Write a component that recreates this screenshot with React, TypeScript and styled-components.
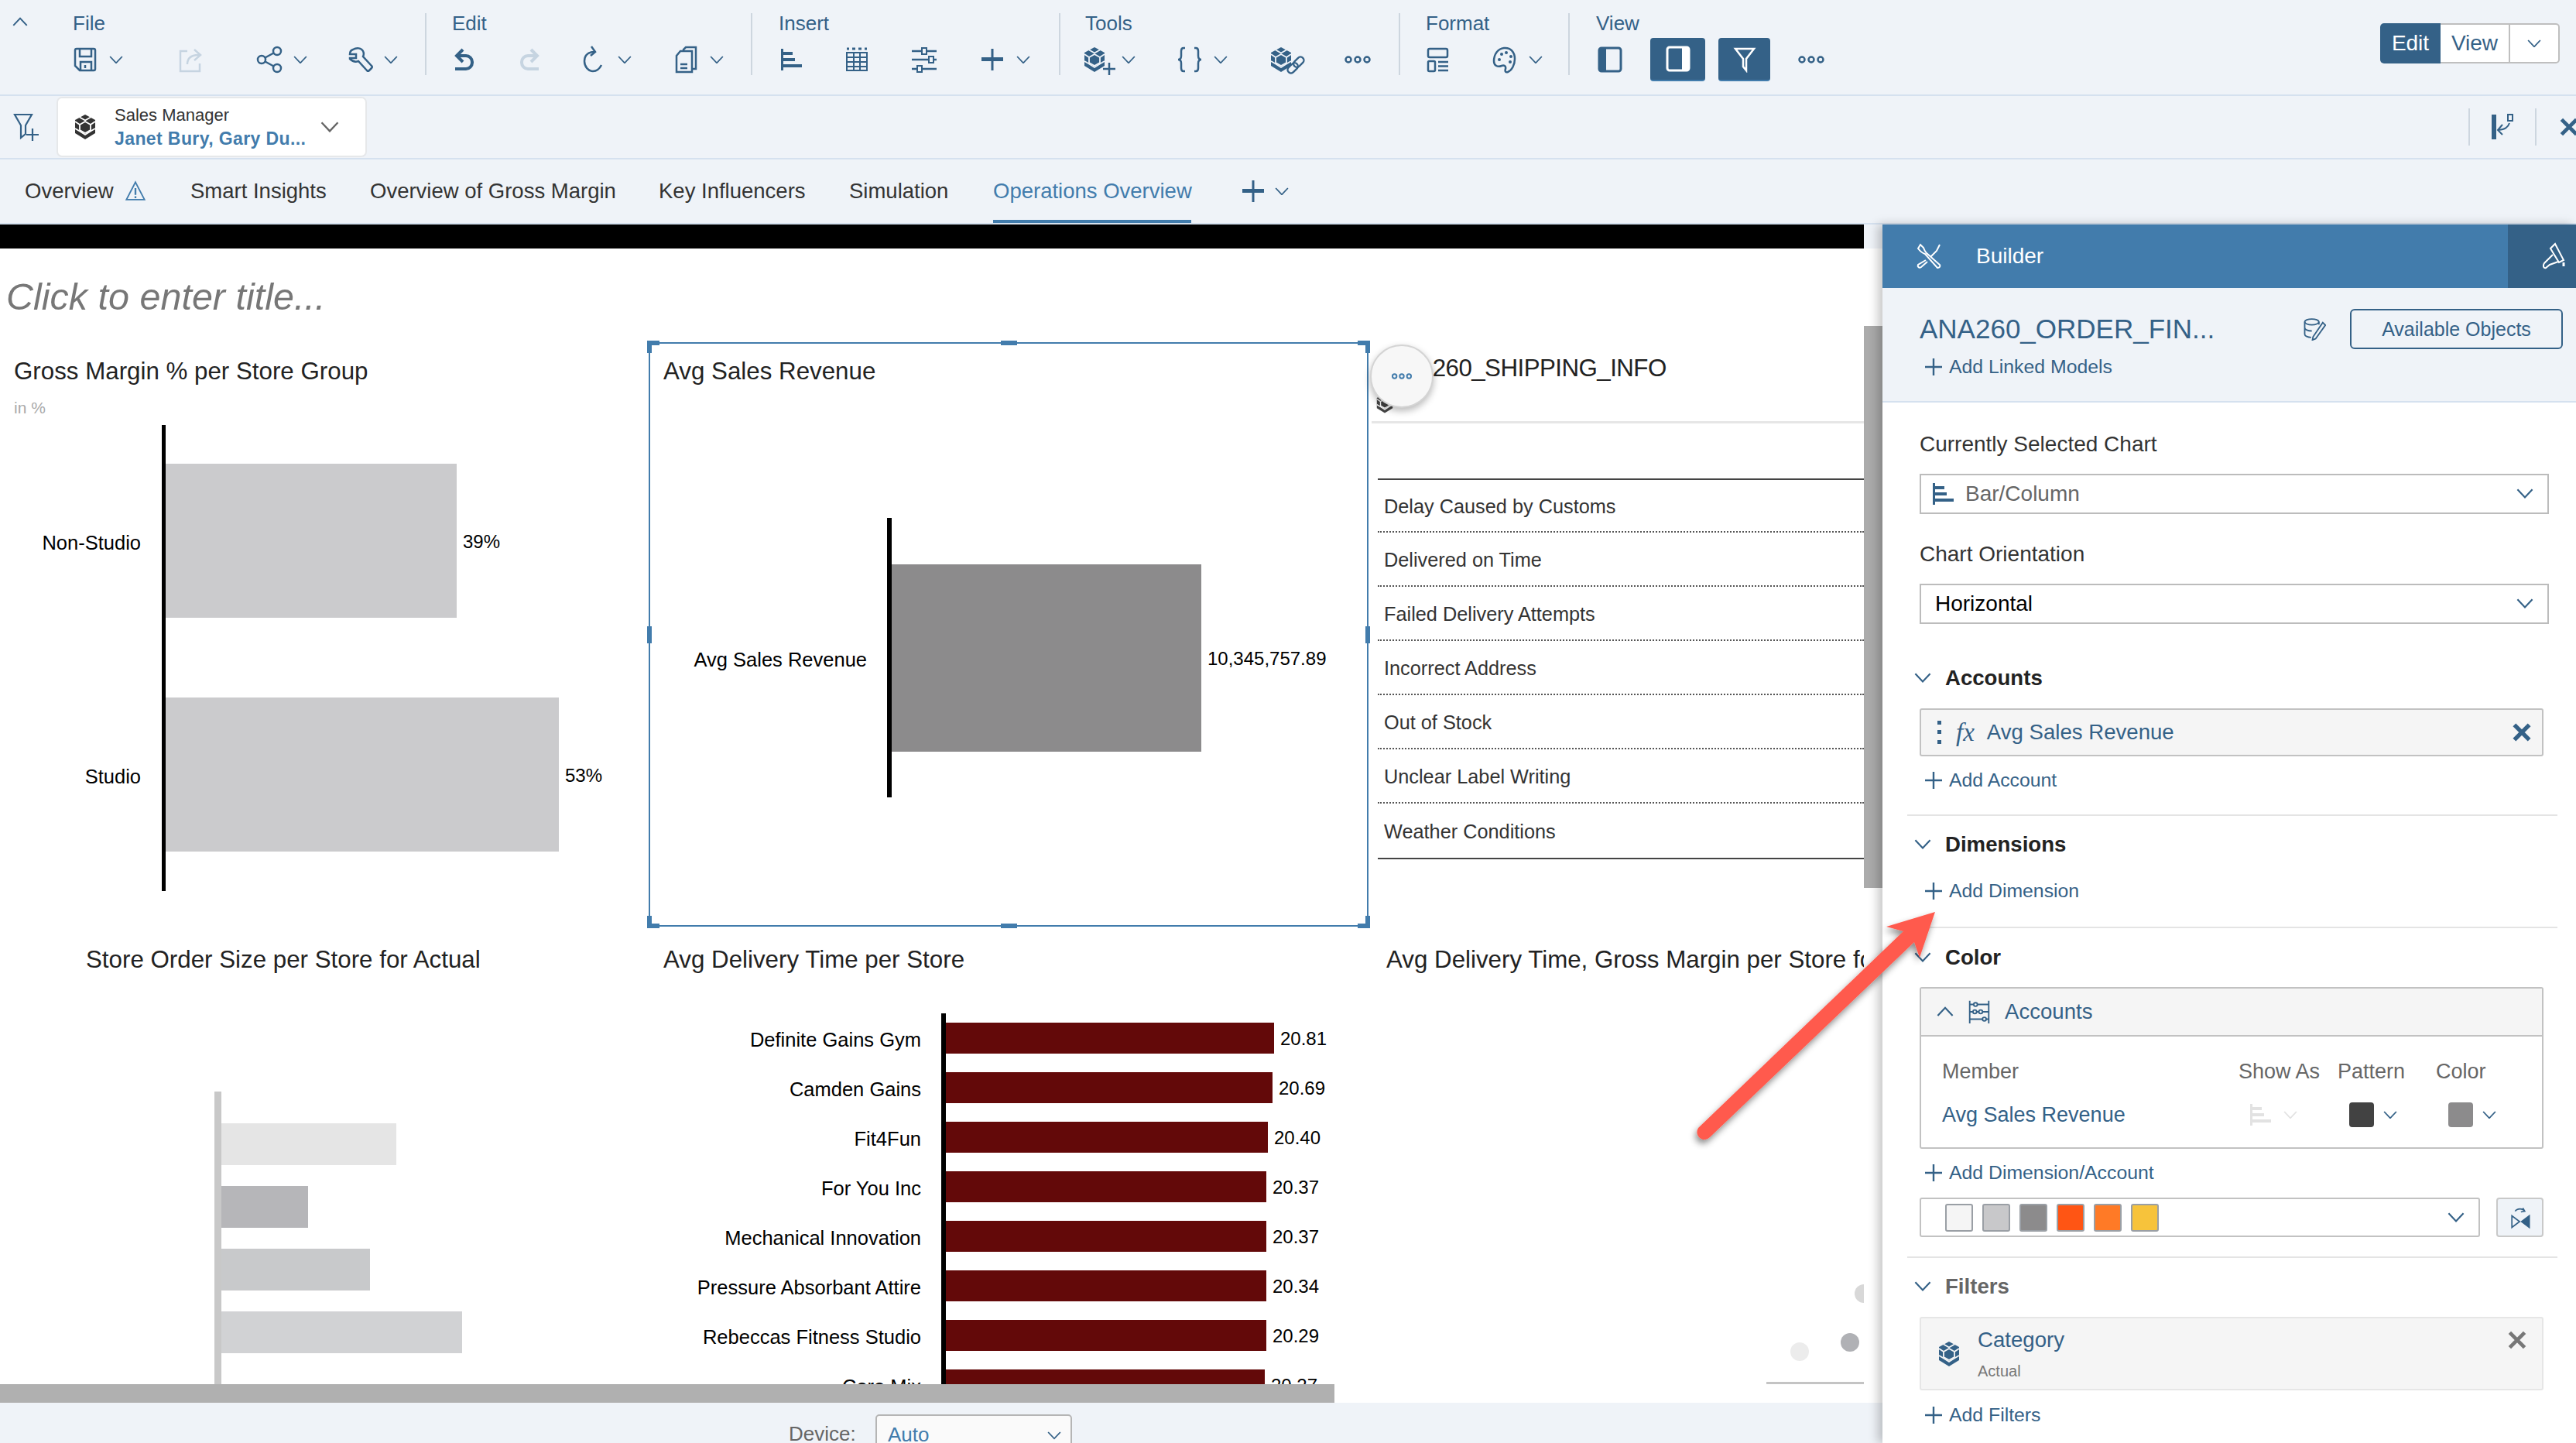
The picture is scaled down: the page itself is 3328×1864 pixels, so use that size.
import React from 'react';
import styled, {createGlobalStyle} from 'styled-components';

const BLUE = '#346187';
const LINK = '#427cac';
const PAGE = '#eff3f8';
const LINE = '#d5e1ef';

const GlobalStyle = createGlobalStyle`
    html, body {
        margin: 0;
        padding: 0;
        background: #fff;
        font-family: "Liberation Sans", Arial, sans-serif;
        color: #333;
    }
    * {
        box-sizing: border-box;
    }
`;

const Root = styled.div`
    position: relative;
    width: 3328px;
    height: 1864px;
    overflow: hidden;
    display: flex;
    flex-direction: column;
    background: ${PAGE};
`;

/* ---------- icons ---------- */

const Svg = ({size = 36, color = BLUE, sw = 2.5, children}: any) => (
    <svg width={size} height={size} viewBox="0 0 36 36" fill="none" stroke={color} strokeWidth={sw} style={{flex: 'none', display: 'block'}}>
        {children}
    </svg>
);

const Chevron = ({color = BLUE, w = 18, up = false}: any) => (
    <svg width={w} height={w * 0.6} viewBox="0 0 18 11" fill="none" stroke={color} strokeWidth={1.8} style={{flex: 'none', display: 'block'}}>
        <path d={up ? 'M1 10 L9 1.5 L17 10' : 'M1 1 L9 9.5 L17 1'} />
    </svg>
);

const SaveIcon = () => (
    <Svg>
        <path d="M5 6 a2 2 0 0 1 2-2 h22 a2 2 0 0 1 2 2 v24 a2 2 0 0 1-2 2 H11 l-6-6z" />
        <path d="M11 4 v10 h15 V4 M12 32 V21 h14 v11 M18 25 v4" />
    </Svg>
);
const ExportIcon = () => (
    <Svg color="#c6d4e1">
        <path d="M15 7 H6 v26 h25 V23" />
        <path d="M15 24 c0-8 5-12 15-12 M24 5 l8 7 -8 7" />
    </Svg>
);
const ShareIcon = () => (
    <Svg>
        <circle cx="8" cy="18" r="5" />
        <circle cx="28" cy="7" r="5" />
        <circle cx="28" cy="29" r="5" />
        <path d="M12.5 15.5 L23.5 9.5 M12.5 20.5 L23.5 26.5" />
    </Svg>
);
const WrenchIcon = () => (
    <Svg>
        <path d="M9 5 c5-3 11-2 13 2 c1.5 3 1 5 0 7 l11 12 c1 1 1 2 0 3 l-3 3 c-1 1-2 1-3 0 L16 20 c-4 1.5-8 0-11-3 l0-1 h8 v-5 H5 c0-2 1-5 4-6z" />
    </Svg>
);
const UndoIcon = ({color = BLUE, flip = false}: any) => (
    <Svg color={color} sw={4}>
        <g transform={flip ? 'translate(36 0) scale(-1 1)' : undefined}>
            <path d="M16 5 L8 13 L16 21" />
            <path d="M8 13 H20 a8 8 0 0 1 8 8 v1 a8 8 0 0 1-8 8 H6" />
        </g>
    </Svg>
);
const RefreshIcon = () => (
    <Svg>
        <path d="M19 8 C9 8 6 14 6 20 C6 27 11 33 17 33 C22 33 26 29 28 25" />
        <path d="M15 1 L20 8 L14 13" />
    </Svg>
);
const CopyIcon = () => (
    <Svg>
        <path d="M15 7 V5 L18 2 H31 V30 H27" />
        <path d="M6 13 L11 7 H26 V34 H6z M11 24 H20 M11 29 H20" />
    </Svg>
);
const BarsIcon = ({color = BLUE}: any) => (
    <svg width="36" height="36" viewBox="0 0 36 36" fill={color} style={{flex: 'none', display: 'block'}}>
        <rect x="5" y="4" width="3" height="28" />
        <rect x="8" y="8" width="12" height="4" />
        <rect x="8" y="16" width="15" height="4" />
        <rect x="8" y="24" width="24" height="4" />
    </svg>
);
const TableIcon = () => (
    <Svg sw={2}>
        <path d="M5 4 h3 M12 4 h4 M20 4 h4 M28 4 h3" strokeWidth={3} />
        <path d="M5 9 H31 V32 H5z M5 15 H31 M5 21 H31 M5 27 H31 M14 9 V32 M22 9 V32" />
    </Svg>
);
const SlidersIcon = () => (
    <Svg sw={2.5}>
        <path d="M2 7 H14 M22 7 H34 M2 18 H24 M30 18 H34 M2 30 H8 M16 30 H34" />
        <rect x="15" y="3" width="6" height="8" strokeWidth={2} />
        <rect x="24" y="14" width="6" height="8" strokeWidth={2} />
        <rect x="9" y="26" width="6" height="8" strokeWidth={2} />
    </Svg>
);
const PlusIcon = () => (
    <svg width="36" height="36" viewBox="0 0 36 36" fill={BLUE} style={{flex: 'none', display: 'block'}}>
        <rect x="4" y="15" width="28" height="5" />
        <rect x="16.5" y="4" width="3" height="28" />
    </svg>
);
const MiniPlus = () => (
    <svg width="22" height="22" viewBox="0 0 22 22" stroke={BLUE} strokeWidth="2.4" style={{flex: 'none', display: 'block'}}>
        <path d="M11 0 V22 M0 11 H22" />
    </svg>
);
const Cube = ({color = BLUE, gap = PAGE, w = 28, h = 32}: any) => (
    <svg width={w} height={h} viewBox="0 0 28 32" style={{flex: 'none', display: 'block'}}>
        <polygon points="14,0 27,7 27,24 14,32 1,24 1,7" fill={color} />
        <polygon points="14,9 21,13 21,20 14,24 7,20 7,13" fill={color} stroke={gap} strokeWidth="1.8" />
        <path d="M1 9 L7 13 M27 9 L21 13 M7 3.5 L14 7.5 L21 3.5 M1 18 L7 21.5 L14 26 L21 21.5 L27 18" stroke={gap} strokeWidth="1.8" fill="none" />
    </svg>
);
const CubePlusBox = styled.div`
    position: relative;
    width: 36px;
    height: 36px;
    flex: none;
    display: flex;
    align-items: center;
`;
const CornerMark = styled.svg`
    position: absolute;
    right: -5px;
    bottom: -2px;
`;
const CubePlusIcon = () => (
    <CubePlusBox>
        <Cube />
        <CornerMark width="16" height="16" viewBox="0 0 16 16" stroke={BLUE} strokeWidth="2.5">
            <path d="M8 0 V16 M0 8 H16" />
        </CornerMark>
    </CubePlusBox>
);
const CubeLinkBox = styled.div`
    position: relative;
    width: 46px;
    height: 36px;
    flex: none;
    display: flex;
    align-items: center;
`;
const LinkMark = styled.svg`
    position: absolute;
    right: 0;
    bottom: -2px;
`;
const CubeLinkIcon = () => (
    <CubeLinkBox>
        <Cube />
        <LinkMark width="26" height="26" viewBox="0 0 24 24" fill="none" stroke={BLUE} strokeWidth="2.2">
            <g transform="rotate(-45 12 12)">
                <rect x="0" y="8" width="14" height="8" rx="4" fill={PAGE} />
                <rect x="10" y="8" width="14" height="8" rx="4" />
            </g>
        </LinkMark>
    </CubeLinkBox>
);
const BracesIcon = () => (
    <Svg>
        <path d="M12 3 H10 Q7 3 7 7 V13 Q7 18 3 18 Q7 18 7 23 V29 Q7 33 10 33 H12" />
        <path d="M24 3 H26 Q29 3 29 7 V13 Q29 18 33 18 Q29 18 29 23 V29 Q29 33 26 33 H24" />
    </Svg>
);
const DotsIcon = ({color = BLUE, size = 36}: any) => (
    <Svg color={color} size={size}>
        <circle cx="6" cy="18" r="3.5" />
        <circle cx="18" cy="18" r="3.5" />
        <circle cx="30" cy="18" r="3.5" />
    </Svg>
);
const LayoutIcon = () => (
    <Svg>
        <rect x="5" y="4" width="25" height="11" rx="2" />
        <rect x="5" y="20" width="9" height="13" rx="1.5" />
        <path d="M18 21 H31 M18 26.5 H31 M18 32 H31" />
    </Svg>
);
const PaletteIcon = () => (
    <Svg>
        <path d="M17 3 C26 2 31 9 31 17 C31 25 27 32 22 34 C19 35 18 33 19 30 C20 26 17 25 14 26 C9 28 4 26 4 20 C4 11 9 4 17 3z" />
        <circle cx="11" cy="18" r="2" fill={BLUE} stroke="none" />
        <circle cx="14" cy="11" r="2" fill={BLUE} stroke="none" />
        <circle cx="20" cy="9" r="2" fill={BLUE} stroke="none" />
        <circle cx="26" cy="14" r="2" fill={BLUE} stroke="none" />
        <circle cx="25" cy="21" r="2" fill={BLUE} stroke="none" />
    </Svg>
);
const PanelIcon = ({color = BLUE, side = 'left'}: any) => (
    <svg width="36" height="36" viewBox="0 0 36 36" style={{flex: 'none', display: 'block'}}>
        <rect x="4" y="3" width="28" height="30" rx="3" fill="none" stroke={color} strokeWidth="3" />
        <rect x={side === 'left' ? 4 : 23} y="3" width="9" height="30" fill={color} />
    </svg>
);
const FunnelIcon = ({color = '#fff', size = 36}: any) => (
    <Svg color={color} size={size}>
        <path d="M6 5 H30 L20 18 V33 L16 28 V18z" />
    </Svg>
);
const FilterPlusIcon = () => (
    <svg width="36" height="36" viewBox="0 0 36 36" fill="none" stroke={BLUE} strokeWidth="2.2" style={{flex: 'none', display: 'block'}}>
        <path d="M3 2 H25 L17 16 V27 L11 32 V16z" />
        <path d="M26 20 V36 M18 28 H34" />
    </svg>
);
const WarnIcon = () => (
    <Svg size={28} color={LINK} sw={2.4}>
        <path d="M18 3 L33 32 H3z" />
        <path d="M18 13 V24 M18 26.5 V29.5" strokeWidth="3" />
    </Svg>
);
const CrossIcon = ({color = BLUE, size = 20, sw = 4}: any) => (
    <svg width={size} height={size} viewBox="0 0 20 20" stroke={color} strokeWidth={sw} style={{flex: 'none', display: 'block'}}>
        <path d="M2 2 L18 18 M18 2 L2 18" />
    </svg>
);
const PanelPinIcon = () => (
    <svg width="30" height="34" viewBox="0 0 30 34" fill="none" stroke={BLUE} strokeWidth="2" style={{flex: 'none', display: 'block'}}>
        <rect x="1" y="1" width="6" height="32" fill={BLUE} stroke="none" />
        <rect x="22" y="1" width="6" height="8" />
        <path d="M24 12 C22 18 18 20 10 21 M15 14 L9 21 L15 27" />
    </svg>
);
const ToolsIcon = () => (
    <Svg color="#fff" sw={2}>
        <path d="M4 8 L7 3 L11 7 C12 10 13 12 15 14 L32 29 C33 31 32 33 29 33 L13 15 C10 14 7 12 4 8z" />
        <path d="M32 3 L28 11 L20 19 M14 23 L4 29 C3 31 5 34 8 32 L16 25" />
    </Svg>
);
const BrushIcon = () => (
    <Svg color="#fff" sw={2}>
        <path d="M20 2 L31 23 L25 26 L14 8z" />
        <path d="M17 16 L6 27 C4 30 5 34 8 33 L13 29 L24 25" />
        <path d="M31 26 V31" strokeWidth="3" />
    </Svg>
);
const DbEditIcon = () => (
    <Svg size={30} sw={2.2}>
        <ellipse cx="14" cy="7" rx="11" ry="4.5" />
        <path d="M3 7 V26 C3 29 8 31 13 31 M3 16 C3 19 8 21 14 21 M25 7 V11" />
        <path d="M31 8 L35 12 L20 33 L15 35 L16 30z" />
    </Svg>
);
const AccountsIcon = () => (
    <Svg size={34} sw={2}>
        <path d="M5 3 V34 M31 3 V34 M5 8 H31 M5 18 H31 M5 28 H31" />
        <circle cx="13" cy="8" r="2.5" fill="#f5f5f5" />
        <circle cx="20" cy="18" r="2.5" fill="#f5f5f5" />
        <circle cx="25" cy="28" r="2.5" fill="#f5f5f5" />
        <circle cx="12" cy="18" r="2.5" fill="#f5f5f5" />
    </Svg>
);
const GripIcon = () => (
    <svg width="8" height="30" viewBox="0 0 8 30" fill={BLUE} style={{flex: 'none', display: 'block'}}>
        <rect x="1" y="0" width="5" height="5" />
        <rect x="1" y="12" width="5" height="5" />
        <rect x="1" y="25" width="5" height="5" />
    </svg>
);
const MirrorIcon = () => (
    <Svg size={30} sw={2}>
        <path d="M5 15 L17 24 L5 33z" />
        <path d="M32 15 L20 24 L32 33z" fill={BLUE} />
        <path d="M10 8 C13 3 22 3 25 8 M22 3 L25 8 L19 9" />
    </Svg>
);

/* ---------- ribbon ---------- */

const Ribbon = styled.div`
    height: 124px;
    flex: none;
    display: flex;
    align-items: flex-start;
    border-bottom: 2px solid ${LINE};
`;
const Collapse = styled.div`
    width: 92px;
    flex: none;
    padding: 22px 0 0 16px;
`;
const Group = styled.div<{$w: number; $pad: number; $last?: boolean}>`
    width: ${(p) => p.$w}px;
    flex: none;
    height: 80px;
    margin-top: 17px;
    padding-left: ${(p) => p.$pad}px;
    border-right: ${(p) => (p.$last ? 'none' : '2px solid #cdd6df')};
`;
const GroupLabel = styled.div`
    height: 24px;
    line-height: 26px;
    padding-left: 2px;
    font-size: 26px;
    color: ${BLUE};
`;
const GroupRow = styled.div`
    display: flex;
    align-items: center;
    height: 36px;
    margin-top: 18px;
`;
const Slot = styled.div<{$w?: number}>`
    display: flex;
    align-items: center;
    gap: 13px;
    flex: none;
    width: ${(p) => (p.$w ? `${p.$w}px` : 'auto')};
`;
const ViewToggle = styled.div`
    margin-left: 2px;
`;
const ActiveButton = styled.div<{$w: number; $ml: number}>`
    width: ${(p) => p.$w}px;
    margin-left: ${(p) => p.$ml}px;
    height: 56px;
    flex: none;
    display: flex;
    align-items: center;
    justify-content: center;
    background: ${BLUE};
    border-bottom: 2px solid ${LINK};
    border-radius: 4px;
`;
const ModeSwitch = styled.div`
    margin: 30px 21px 0 auto;
    height: 52px;
    display: flex;
    font-size: 28px;
`;
const ModeEdit = styled.div`
    width: 78px;
    display: flex;
    align-items: center;
    justify-content: center;
    color: #fff;
    background: ${BLUE};
    border-radius: 5px 0 0 5px;
`;
const ModeView = styled.div`
    width: 90px;
    display: flex;
    align-items: center;
    justify-content: center;
    color: ${BLUE};
    background: #fff;
    border: 2px solid #bfbfbf;
    border-left: none;
`;
const ModeMenu = styled.div`
    width: 64px;
    display: flex;
    align-items: center;
    justify-content: center;
    background: #fff;
    border: 2px solid #bfbfbf;
    border-left: none;
    border-radius: 0 5px 5px 0;
`;

/* ---------- filter bar + tabs ---------- */

const FilterBar = styled.div`
    height: 82px;
    flex: none;
    display: flex;
    align-items: center;
    border-bottom: 2px solid ${LINE};
`;
const FilterAdd = styled.div`
    width: 73px;
    flex: none;
    padding-left: 16px;
`;
const FilterCard = styled.div`
    width: 401px;
    height: 78px;
    flex: none;
    display: flex;
    align-items: center;
    padding: 0 34px 0 21px;
    background: #fff;
    border: 2px solid #e6e8ea;
    border-radius: 7px;
`;
const FilterText = styled.div`
    margin-left: 24px;
    flex: 1;
    font-size: 22px;
    line-height: 31px;
`;
const FilterName = styled.div`
    color: #333;
`;
const FilterValue = styled.div`
    color: ${LINK};
    font-weight: 700;
    font-size: 23px;
    letter-spacing: 0.4px;
    white-space: nowrap;
`;
const BarTools = styled.div`
    margin-left: auto;
    height: 48px;
    display: flex;
    align-items: center;
`;
const ToolCell = styled.div<{$w: number}>`
    width: ${(p) => p.$w}px;
    height: 48px;
    display: flex;
    align-items: center;
    justify-content: center;
    border-left: 2px solid #cdd6df;
`;
const CloseCell = styled(ToolCell)`
    justify-content: flex-start;
    padding-left: 30px;
`;
const TabBar = styled.div`
    height: 84px;
    flex: none;
    display: flex;
    align-items: stretch;
    padding-left: 32px;
    border-bottom: 2px solid ${LINE};
    font-size: 27.5px;
`;
const Tab = styled.div<{$active?: boolean; $w: number}>`
    width: ${(p) => p.$w}px;
    flex: none;
    display: flex;
    align-items: center;
    gap: 14px;
    white-space: nowrap;
    padding-top: 3px;
    color: ${(p) => (p.$active ? LINK : '#333')};
    border-bottom: 4px solid ${(p) => (p.$active ? LINK : 'transparent')};
`;
const TabAdd = styled.div`
    margin-left: 62px;
    display: flex;
    align-items: center;
    gap: 10px;
`;

/* ---------- main ---------- */

const Main = styled.div`
    flex: 1;
    display: flex;
    min-height: 0;
`;
const CanvasColumn = styled.div`
    width: 2432px;
    flex: none;
    display: flex;
    flex-direction: column;
`;
const BlackBand = styled.div`
    height: 31px;
    flex: none;
    background: #000;
    margin-right: 24px;
`;
const Sheet = styled.div`
    height: 1467px;
    flex: none;
    display: flex;
    background: #fff;
`;
const TileGrid = styled.div`
    width: 2408px;
    flex: none;
    display: grid;
    grid-template-columns: 838px 930px 640px;
    grid-template-rows: 120px 756px 591px;
`;
const PageTitle = styled.div`
    grid-column: 1 / span 3;
    padding: 37px 0 0 8px;
    font-size: 48.5px;
    line-height: 50px;
    font-style: italic;
    color: #777;
`;
const Tile = styled.div<{$clip?: boolean}>`
    position: relative;
    min-width: 0;
    overflow: ${(p) => (p.$clip ? 'hidden' : 'visible')};
`;
const SelectedTile = styled(Tile)`
    z-index: 2;
`;
const TileTitle = styled.div<{$left: number; $top: number}>`
    padding-left: ${(p) => p.$left}px;
    padding-top: ${(p) => p.$top}px;
    height: ${(p) => p.$top + 44}px;
    line-height: 44px;
    font-size: 31.3px;
    color: #222;
    white-space: nowrap;
`;
const ShipTitle = styled(TileTitle)`
    letter-spacing: -0.55px;
`;
const TileSub = styled.div`
    margin-top: 13px;
    padding-left: 18px;
    height: 24px;
    line-height: 24px;
    font-size: 21px;
    color: #aaa;
`;
const Chart = styled.div<{$top: number; $h: number}>`
    margin-top: ${(p) => p.$top}px;
    height: ${(p) => p.$h}px;
    display: flex;
    overflow: hidden;
`;
const LabelColumn = styled.div<{$w: number; $pr: number; $pt: number; $gap: number}>`
    width: ${(p) => p.$w}px;
    flex: none;
    padding: ${(p) => p.$pt}px ${(p) => p.$pr}px 0 0;
    display: flex;
    flex-direction: column;
    gap: ${(p) => p.$gap}px;
`;
const AxisLabel = styled.div<{$h: number}>`
    height: ${(p) => p.$h}px;
    flex: none;
    padding-top: 5px;
    display: flex;
    align-items: center;
    justify-content: flex-end;
    font-size: 25.5px;
    color: #000;
    white-space: nowrap;
`;
const BarColumn = styled.div<{$axis: string; $axisW: number; $pt: number; $gap: number}>`
    flex: 1;
    border-left: ${(p) => p.$axisW}px solid ${(p) => p.$axis};
    padding-top: ${(p) => p.$pt}px;
    display: flex;
    flex-direction: column;
    gap: ${(p) => p.$gap}px;
`;
const BarRow = styled.div<{$h: number}>`
    height: ${(p) => p.$h}px;
    flex: none;
    display: flex;
    align-items: center;
    gap: 8px;
`;
const Bar = styled.div<{$color: string}>`
    height: 100%;
    flex: none;
    background: ${(p) => p.$color};
`;
const BarValue = styled.div`
    padding-top: 2px;
    font-size: 24px;
    color: #000;
    white-space: nowrap;
`;

const SelectionFrame = styled.div`
    position: absolute;
    inset: 1px 0 0 0;
    border: 2px solid ${LINK};
    pointer-events: none;
`;
const EdgeHandle = styled.div<{$x: 'l' | 'c' | 'r'; $y: 't' | 'm' | 'b'}>`
    position: absolute;
    background: ${LINK};
    width: ${(p) => (p.$x === 'c' ? '21px' : '6px')};
    height: ${(p) => (p.$y === 'm' ? '22px' : '6px')};
    left: ${(p) => (p.$x === 'l' ? '-4px' : p.$x === 'c' ? 'calc(50% - 10px)' : 'auto')};
    right: ${(p) => (p.$x === 'r' ? '-4px' : 'auto')};
    top: ${(p) => (p.$y === 't' ? '-4px' : p.$y === 'm' ? 'calc(50% - 11px)' : 'auto')};
    bottom: ${(p) => (p.$y === 'b' ? '-4px' : 'auto')};
`;
const CornerHandle = styled.div<{$x: 'l' | 'r'; $y: 't' | 'b'}>`
    position: absolute;
    width: 16px;
    height: 16px;
    ${(p) => (p.$x === 'l' ? 'left: -4px; border-left: 6px' : 'right: -4px; border-right: 6px')} solid ${LINK};
    ${(p) => (p.$y === 't' ? 'top: -4px; border-top: 6px' : 'bottom: -4px; border-bottom: 6px')} solid ${LINK};
`;
const MoreButton = styled.div`
    position: absolute;
    top: 4px;
    right: -84px;
    width: 82px;
    height: 82px;
    display: flex;
    align-items: center;
    justify-content: center;
    background: #f7f7f7;
    border: 2px solid #d4d4d4;
    border-radius: 50%;
    box-shadow: 0 4px 10px rgba(0, 0, 0, 0.28);
`;
const ShipHeader = styled.div`
    height: 49px;
    margin-left: 4px;
    padding-left: 6px;
    display: flex;
    align-items: center;
    border-bottom: 3px solid #e6e6e6;
`;
const ShipTable = styled.div`
    margin: 71px 0 0 12px;
    border-top: 2px solid #444;
    border-bottom: 2px solid #444;
`;
const ShipRow = styled.div`
    height: 70px;
    padding: 3px 0 0 8px;
    display: flex;
    align-items: center;
    font-size: 25.3px;
    color: #333;
    border-bottom: 2px dotted #555;
    &:first-child {
        height: 68px;
    }
    &:last-child {
        border-bottom: none;
    }
`;
const Bubble = styled.div<{$x: number; $y: number; $color: string}>`
    position: absolute;
    left: ${(p) => p.$x}px;
    top: ${(p) => p.$y}px;
    width: 24px;
    height: 24px;
    border-radius: 50%;
    background: ${(p) => p.$color};
`;
const BaseLine = styled.div`
    position: absolute;
    right: 0;
    bottom: 0;
    width: 126px;
    height: 3px;
    background: #c4c4c4;
`;
const ScrollTrack = styled.div`
    width: 24px;
    flex: none;
    background: #fff;
    padding-top: 100px;
`;
const ScrollThumb = styled.div`
    height: 726px;
    background: #ababab;
`;
const HScroll = styled.div`
    height: 24px;
    flex: none;
    background: #fff;
`;
const HThumb = styled.div`
    width: 1724px;
    height: 100%;
    background: #b0b0b0;
`;
const Footer = styled.div`
    height: 52px;
    flex: none;
    display: flex;
    justify-content: flex-start;
    align-items: flex-start;
    padding: 15px 0 0 1019px;
    background: ${PAGE};
`;
const DeviceLabel = styled.div`
    width: 112px;
    padding-top: 10px;
    font-size: 26px;
    line-height: 30px;
    color: #666;
`;
const DeviceSelect = styled.div`
    width: 254px;
    height: 60px;
    display: flex;
    align-items: flex-start;
    justify-content: space-between;
    padding: 9px 12px 0 14px;
    font-size: 26px;
    line-height: 30px;
    color: ${LINK};
    background: #fafafa;
    border: 2px solid #b5b5b5;
    border-radius: 5px;
`;
const DeviceChevron = styled.div`
    padding-top: 11px;
`;

/* ---------- builder panel ---------- */

const Panel = styled.div`
    width: 896px;
    flex: none;
    position: relative;
    z-index: 3;
    background: #fff;
    box-shadow: -6px 0 12px rgba(0, 0, 0, 0.22);
    display: flex;
    flex-direction: column;
`;
const PanelHeader = styled.div`
    height: 82px;
    flex: none;
    display: flex;
    align-items: center;
    padding-left: 42px;
    background: ${LINK};
    color: #fff;
    font-size: 28px;
`;
const HeaderTitle = styled.div`
    margin-left: 43px;
    flex: 1;
`;
const HeaderTab = styled.div`
    width: 88px;
    height: 100%;
    display: flex;
    align-items: center;
    justify-content: center;
    padding-left: 30px;
    background: ${BLUE};
`;
const ModelHead = styled.div`
    height: 148px;
    flex: none;
    padding: 27px 17px 0 48px;
    background: ${PAGE};
    border-bottom: 2px solid ${LINE};
`;
const ModelRow = styled.div`
    height: 52px;
    display: flex;
    align-items: center;
`;
const ModelName = styled.div`
    width: 495px;
    font-size: 35px;
    color: ${BLUE};
    white-space: nowrap;
`;
const ObjectsButton = styled.div`
    margin-left: auto;
    width: 275px;
    height: 52px;
    display: flex;
    align-items: center;
    justify-content: center;
    font-size: 25px;
    color: ${BLUE};
    border: 2.5px solid ${BLUE};
    border-radius: 6px;
`;
const AddLink = styled.div<{$mt: number}>`
    margin-top: ${(p) => p.$mt}px;
    height: 30px;
    padding-left: 7px;
    display: flex;
    align-items: center;
    gap: 9px;
    font-size: 24.8px;
    color: ${BLUE};
`;
const PanelBody = styled.div`
    flex: 1;
    padding-left: 48px;
`;
const FieldLabel = styled.div<{$mt: number}>`
    margin-top: ${(p) => p.$mt}px;
    height: 32px;
    line-height: 32px;
    font-size: 28px;
    color: #333;
`;
const Select = styled.div<{$mt: number; $w?: number}>`
    margin-top: ${(p) => p.$mt}px;
    width: ${(p) => p.$w ?? 813}px;
    height: 52px;
    display: flex;
    align-items: center;
    padding: 0 18px;
    font-size: 28px;
    color: #000;
    background: #fff;
    border: 2.5px solid #bcbcbc;
`;
const SelectIcon = styled.div`
    margin-left: -8px;
`;
const SelectGrey = styled.span`
    color: #666;
    margin-left: 11px;
`;
const ChevronSlot = styled.div`
    margin-left: auto;
`;
const SectionHead = styled.div<{$mt: number; $muted?: boolean}>`
    margin-top: ${(p) => p.$mt}px;
    margin-left: -7px;
    height: 32px;
    display: flex;
    align-items: center;
    gap: 18px;
    font-size: 27.6px;
    font-weight: 700;
    color: ${(p) => (p.$muted ? '#666' : '#222')};
`;
const Token = styled.div<{$mt: number}>`
    margin-top: ${(p) => p.$mt}px;
    width: 806px;
    height: 62px;
    display: flex;
    align-items: center;
    padding: 0 14px 0 20px;
    font-size: 27.6px;
    color: ${BLUE};
    background: #f5f5f5;
    border: 2.5px solid #c2c2c2;
    border-radius: 3px;
`;
const FxMark = styled.span`
    margin: 0 16px 0 17px;
    font-family: "Liberation Serif", serif;
    font-style: italic;
    font-size: 33px;
`;
const TokenClose = styled.div`
    margin-left: auto;
`;
const Divider = styled.div<{$mt: number}>`
    margin: ${(p) => p.$mt}px 0 0 -16px;
    width: 840px;
    height: 2px;
    background: #e4e4e4;
`;
const ColorBox = styled.div`
    margin-top: 22px;
    width: 806px;
    border: 2.5px solid #c2c2c2;
    border-radius: 3px;
`;
const ColorHead = styled.div`
    height: 62px;
    display: flex;
    align-items: center;
    padding-left: 20px;
    gap: 16px;
    font-size: 27.6px;
    color: ${BLUE};
    background: #f5f5f5;
    border-bottom: 2.5px solid #c2c2c2;
`;
const ColorTable = styled.div`
    height: 143px;
    padding: 29px 0 0 27px;
    display: grid;
    grid-template-columns: 383px 128px 127px 1fr;
    grid-template-rows: 32px 32px;
    row-gap: 24px;
    align-items: center;
    font-size: 27px;
    color: #666;
`;
const MemberName = styled.div`
    color: ${BLUE};
`;
const SwatchCell = styled.div<{$pl: number}>`
    display: flex;
    align-items: center;
    gap: 12px;
    padding-left: ${(p) => p.$pl}px;
`;
const Swatch = styled.div<{$color: string}>`
    width: 32px;
    height: 32px;
    border-radius: 4px;
    background: ${(p) => p.$color};
`;
const PaletteRow = styled.div`
    margin-top: 17px;
    width: 806px;
    height: 51px;
    display: flex;
    justify-content: space-between;
`;
const PaletteSelect = styled.div`
    width: 724px;
    height: 100%;
    display: flex;
    align-items: center;
    gap: 12px;
    padding: 0 18px 0 31px;
    background: #fff;
    border: 2.5px solid #c2c2c2;
    border-radius: 3px;
`;
const PaletteChip = styled.div<{$color: string}>`
    width: 36px;
    height: 36px;
    border-radius: 3px;
    background: ${(p) => p.$color};
    border: 2px solid #9a9fa5;
`;
const MirrorButton = styled.div`
    width: 61px;
    height: 100%;
    display: flex;
    align-items: center;
    justify-content: center;
    background: ${PAGE};
    border: 2.5px solid #c9c9c9;
    border-radius: 4px;
`;
const FilterToken = styled.div`
    margin-top: 23px;
    width: 806px;
    height: 95px;
    display: flex;
    align-items: center;
    padding-left: 22px;
    background: #f5f5f5;
    border: 2.5px solid #e6e6e6;
    border-radius: 3px;
`;
const FilterTokenText = styled.div`
    margin-left: 23px;
    flex: 1;
`;
const FilterTokenName = styled.div`
    font-size: 27.6px;
    line-height: 32px;
    color: ${BLUE};
`;
const FilterTokenSub = styled.div`
    margin-top: 12px;
    font-size: 20px;
    line-height: 24px;
    color: #777;
`;
const FilterTokenClose = styled.div`
    align-self: flex-start;
    padding: 16px 20px 0 0;
`;
const ArrowOverlay = styled.svg`
    position: absolute;
    left: 0;
    top: 0;
    z-index: 10;
    pointer-events: none;
`;

/* ---------- data ---------- */

const ribbon = [
    {label: 'File', w: 459, pad: 0, slots: [
        {icon: <SaveIcon />, w: 135, chev: true},
        {icon: <ExportIcon />, w: 103},
        {icon: <ShareIcon />, w: 117, chev: true},
        {icon: <WrenchIcon />, chev: true},
    ]},
    {label: 'Edit', w: 421, pad: 31, slots: [
        {icon: <UndoIcon />, w: 84},
        {icon: <UndoIcon color="#c6d4e1" flip />, w: 83},
        {icon: <RefreshIcon />, w: 119, chev: true},
        {icon: <CopyIcon />, chev: true},
    ]},
    {label: 'Insert', w: 398, pad: 32, slots: [
        {icon: <BarsIcon />, w: 85},
        {icon: <TableIcon />, w: 87},
        {icon: <SlidersIcon />, w: 88},
        {icon: <PlusIcon />, chev: true},
    ]},
    {label: 'Tools', w: 439, pad: 30, slots: [
        {icon: <CubePlusIcon />, w: 119, chev: true},
        {icon: <BracesIcon />, w: 122, chev: true},
        {icon: <CubeLinkIcon />, w: 95},
        {icon: <DotsIcon />},
    ]},
    {label: 'Format', w: 219, pad: 31, slots: [
        {icon: <LayoutIcon />, w: 86},
        {icon: <PaletteIcon />, chev: true},
    ]},
];

const tabs = [
    {label: 'Smart Insights', w: 232},
    {label: 'Overview of Gross Margin', w: 373},
    {label: 'Key Influencers', w: 246},
    {label: 'Simulation', w: 186},
];

const shipping = ['Delay Caused by Customs', 'Delivered on Time', 'Failed Delivery Attempts', 'Incorrect Address', 'Out of Stock', 'Unclear Label Writing', 'Weather Conditions'];

const stores = [
    {name: 'Definite Gains Gym', w: 424, v: '20.81'},
    {name: 'Camden Gains', w: 422, v: '20.69'},
    {name: 'Fit4Fun', w: 416, v: '20.40'},
    {name: 'For You Inc', w: 414, v: '20.37'},
    {name: 'Mechanical Innovation', w: 414, v: '20.37'},
    {name: 'Pressure Absorbant Attire', w: 414, v: '20.34'},
    {name: 'Rebeccas Fitness Studio', w: 414, v: '20.29'},
    {name: 'Core Mix', w: 412, v: '20.27'},
];

const orderBars = [
    {w: 226, c: '#e5e5e5'},
    {w: 112, c: '#b6b6b9'},
    {w: 192, c: '#c8c9cb'},
    {w: 311, c: '#d1d2d4'},
];

const paletteChips = ['#f5f5f5', '#c8c8ca', '#8c8b8c', '#ff5514', '#ff7a26', '#f7c33b'];

const App = () => (
    <Root>
        <GlobalStyle />
        <Ribbon>
            <Collapse><Chevron w={20} up /></Collapse>
            {ribbon.map((g) => (
                <Group key={g.label} $w={g.w} $pad={g.pad}>
                    <GroupLabel>{g.label}</GroupLabel>
                    <GroupRow>
                        {g.slots.map((s: any, i: number) => (
                            <Slot key={i} $w={s.w}>
                                {s.icon}
                                {s.chev && <Chevron />}
                            </Slot>
                        ))}
                    </GroupRow>
                </Group>
            ))}
            <Group $w={400} $pad={32} $last>
                <GroupLabel>View</GroupLabel>
                <GroupRow>
                    <ViewToggle><PanelIcon /></ViewToggle>
                    <ActiveButton $w={71} $ml={34}><PanelIcon color="#fff" side="right" /></ActiveButton>
                    <ActiveButton $w={67} $ml={17}><FunnelIcon /></ActiveButton>
                    <Slot $w={35} />
                    <DotsIcon />
                </GroupRow>
            </Group>
            <ModeSwitch>
                <ModeEdit>Edit</ModeEdit>
                <ModeView>View</ModeView>
                <ModeMenu><Chevron /></ModeMenu>
            </ModeSwitch>
        </Ribbon>

        <FilterBar>
            <FilterAdd><FilterPlusIcon /></FilterAdd>
            <FilterCard>
                <Cube color="#333" gap="#fff" />
                <FilterText>
                    <FilterName>Sales Manager</FilterName>
                    <FilterValue>Janet Bury, Gary Du...</FilterValue>
                </FilterText>
                <Chevron color="#666" w={24} />
            </FilterCard>
            <BarTools>
                <ToolCell $w={86}><PanelPinIcon /></ToolCell>
                <CloseCell $w={53}><CrossIcon size={24} /></CloseCell>
            </BarTools>
        </FilterBar>

        <TabBar>
            <Tab $w={214}>Overview <WarnIcon /></Tab>
            {tabs.map((t) => <Tab key={t.label} $w={t.w}>{t.label}</Tab>)}
            <Tab $w={256} $active>Operations Overview</Tab>
            <TabAdd><PlusIcon /><Chevron /></TabAdd>
        </TabBar>

        <Main>
            <CanvasColumn>
                <BlackBand />
                <Sheet>
                    <TileGrid>
                        <PageTitle>Click to enter title...</PageTitle>

                        <Tile>
                            <TileTitle $left={18} $top={17}>Gross Margin % per Store Group</TileTitle>
                            <TileSub>in %</TileSub>
                            <Chart $top={10} $h={602}>
                                <LabelColumn $w={209} $pr={27} $pt={50} $gap={103}>
                                    <AxisLabel $h={199}>Non-Studio</AxisLabel>
                                    <AxisLabel $h={199}>Studio</AxisLabel>
                                </LabelColumn>
                                <BarColumn $axis="#000" $axisW={5} $pt={50} $gap={103}>
                                    <BarRow $h={199}><Bar $color="#cbcbcd" style={{width: 376}} /><BarValue>39%</BarValue></BarRow>
                                    <BarRow $h={199}><Bar $color="#cbcbcd" style={{width: 508}} /><BarValue>53%</BarValue></BarRow>
                                </BarColumn>
                            </Chart>
                        </Tile>

                        <SelectedTile>
                            <TileTitle $left={19} $top={17}>Avg Sales Revenue</TileTitle>
                            <Chart $top={167} $h={361}>
                                <LabelColumn $w={308} $pr={26} $pt={60} $gap={0}>
                                    <AxisLabel $h={242}>Avg Sales Revenue</AxisLabel>
                                </LabelColumn>
                                <BarColumn $axis="#000" $axisW={6} $pt={60} $gap={0}>
                                    <BarRow $h={242}><Bar $color="#8c8b8c" style={{width: 400}} /><BarValue>10,345,757.89</BarValue></BarRow>
                                </BarColumn>
                            </Chart>
                            <SelectionFrame>
                                <CornerHandle $x="l" $y="t" />
                                <EdgeHandle $x="c" $y="t" />
                                <CornerHandle $x="r" $y="t" />
                                <EdgeHandle $x="l" $y="m" />
                                <EdgeHandle $x="r" $y="m" />
                                <CornerHandle $x="l" $y="b" />
                                <EdgeHandle $x="c" $y="b" />
                                <CornerHandle $x="r" $y="b" />
                            </SelectionFrame>
                            <MoreButton><DotsIcon size={28} color={LINK} /></MoreButton>
                        </SelectedTile>

                        <Tile>
                            <ShipTitle $left={20} $top={13}>ANA260_SHIPPING_INFO</ShipTitle>
                            <ShipHeader><Cube color="#444" gap="#fff" w={22} h={26} /></ShipHeader>
                            <ShipTable>
                                {shipping.map((s) => <ShipRow key={s}>{s}</ShipRow>)}
                            </ShipTable>
                        </Tile>

                        <Tile $clip>
                            <TileTitle $left={111} $top={21}>Store Order Size per Store for Actual</TileTitle>
                            <Chart $top={148} $h={378}>
                                <LabelColumn $w={277} $pr={0} $pt={0} $gap={0} />
                                <BarColumn $axis="#c8c8c8" $axisW={9} $pt={41} $gap={27}>
                                    {orderBars.map((b) => (
                                        <BarRow key={b.w} $h={54}><Bar $color={b.c} style={{width: b.w}} /></BarRow>
                                    ))}
                                </BarColumn>
                            </Chart>
                        </Tile>

                        <Tile $clip>
                            <TileTitle $left={19} $top={21}>Avg Delivery Time per Store</TileTitle>
                            <Chart $top={47} $h={479}>
                                <LabelColumn $w={378} $pr={26} $pt={12} $gap={24}>
                                    {stores.map((s) => <AxisLabel key={s.name} $h={40}>{s.name}</AxisLabel>)}
                                </LabelColumn>
                                <BarColumn $axis="#000" $axisW={6} $pt={12} $gap={24}>
                                    {stores.map((s) => (
                                        <BarRow key={s.name} $h={40}>
                                            <Bar $color="#630909" style={{width: s.w}} />
                                            <BarValue>{s.v}</BarValue>
                                        </BarRow>
                                    ))}
                                </BarColumn>
                            </Chart>
                        </Tile>

                        <Tile $clip>
                            <TileTitle $left={23} $top={21}>Avg Delivery Time, Gross Margin per Store for Actual</TileTitle>
                            <Bubble $x={628} $y={462} $color="#d8d8d8" />
                            <Bubble $x={610} $y={525} $color="#b0b1b5" />
                            <Bubble $x={545} $y={537} $color="#ececec" />
                            <BaseLine />
                        </Tile>
                    </TileGrid>
                    <ScrollTrack><ScrollThumb /></ScrollTrack>
                </Sheet>
                <HScroll><HThumb /></HScroll>
                <Footer>
                    <DeviceLabel>Device:</DeviceLabel>
                    <DeviceSelect>Auto<DeviceChevron><Chevron /></DeviceChevron></DeviceSelect>
                </Footer>
            </CanvasColumn>

            <Panel>
                <PanelHeader>
                    <ToolsIcon />
                    <HeaderTitle>Builder</HeaderTitle>
                    <HeaderTab><BrushIcon /></HeaderTab>
                </PanelHeader>
                <ModelHead>
                    <ModelRow>
                        <ModelName>ANA260_ORDER_FIN...</ModelName>
                        <DbEditIcon />
                        <ObjectsButton>Available Objects</ObjectsButton>
                    </ModelRow>
                    <AddLink $mt={8}><MiniPlus />Add Linked Models</AddLink>
                </ModelHead>
                <PanelBody>
                    <FieldLabel $mt={38}>Currently Selected Chart</FieldLabel>
                    <Select $mt={22}><SelectIcon><BarsIcon /></SelectIcon><SelectGrey>Bar/Column</SelectGrey><ChevronSlot><Chevron w={22} /></ChevronSlot></Select>
                    <FieldLabel $mt={36}>Chart Orientation</FieldLabel>
                    <Select $mt={22}>Horizontal<ChevronSlot><Chevron w={22} /></ChevronSlot></Select>

                    <SectionHead $mt={54}><Chevron w={22} />Accounts</SectionHead>
                    <Token $mt={23}><GripIcon /><FxMark>fx</FxMark>Avg Sales Revenue<TokenClose><CrossIcon size={24} sw={4.5} /></TokenClose></Token>
                    <AddLink $mt={16}><MiniPlus />Add Account</AddLink>
                    <Divider $mt={29} />

                    <SectionHead $mt={21}><Chevron w={22} />Dimensions</SectionHead>
                    <AddLink $mt={29}><MiniPlus />Add Dimension</AddLink>
                    <Divider $mt={31} />

                    <SectionHead $mt={22}><Chevron w={22} />Color</SectionHead>
                    <ColorBox>
                        <ColorHead><Chevron w={22} up /><AccountsIcon />Accounts</ColorHead>
                        <ColorTable>
                            <div>Member</div>
                            <div>Show As</div>
                            <div>Pattern</div>
                            <div>Color</div>
                            <MemberName>Avg Sales Revenue</MemberName>
                            <SwatchCell $pl={10}><BarsIcon color="#e2e2e2" /><Chevron color="#e2e2e2" /></SwatchCell>
                            <SwatchCell $pl={15}><Swatch $color="#424242" /><Chevron /></SwatchCell>
                            <SwatchCell $pl={16}><Swatch $color="#8c8b8c" /><Chevron /></SwatchCell>
                        </ColorTable>
                    </ColorBox>
                    <AddLink $mt={16}><MiniPlus />Add Dimension/Account</AddLink>
                    <PaletteRow>
                        <PaletteSelect>
                            {paletteChips.map((c) => <PaletteChip key={c} $color={c} />)}
                            <ChevronSlot><Chevron w={22} /></ChevronSlot>
                        </PaletteSelect>
                        <MirrorButton><MirrorIcon /></MirrorButton>
                    </PaletteRow>
                    <Divider $mt={25} />

                    <SectionHead $mt={21} $muted><Chevron w={22} />Filters</SectionHead>
                    <FilterToken>
                        <Cube gap="#f5f5f5" />
                        <FilterTokenText>
                            <FilterTokenName>Category</FilterTokenName>
                            <FilterTokenSub>Actual</FilterTokenSub>
                        </FilterTokenText>
                        <FilterTokenClose><CrossIcon color="#777" size={24} /></FilterTokenClose>
                    </FilterToken>
                    <AddLink $mt={17}><MiniPlus />Add Filters</AddLink>
                </PanelBody>
            </Panel>
        </Main>

        <ArrowOverlay width="3328" height="1864" viewBox="0 0 3328 1864">
            <defs>
                <filter id="arrowShadow" x="-10%" y="-10%" width="125%" height="125%">
                    <feDropShadow dx="-2" dy="5" stdDeviation="4" floodColor="#000" floodOpacity="0.45" />
                </filter>
            </defs>
            <g fill="#ff5a4d" filter="url(#arrowShadow)">
                <path d="M2500 1178 L2437 1197 L2459 1203 L2194 1457 Q2190 1464 2196 1470 Q2203 1475 2209 1469 L2473 1217 L2480 1237z" />
            </g>
        </ArrowOverlay>
    </Root>
);

export default App;
